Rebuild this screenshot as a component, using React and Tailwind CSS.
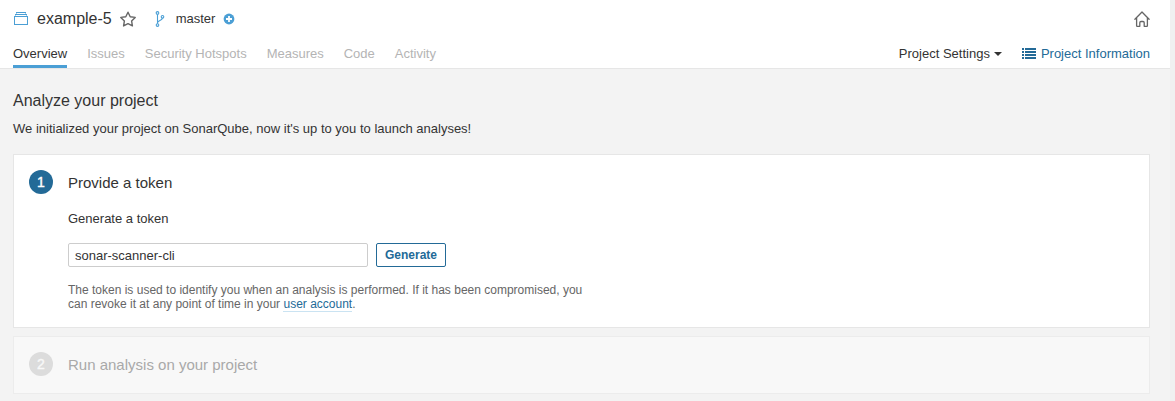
import React from 'react';

function ProjectIcon() {
  return (
    <svg width="16" height="16" viewBox="0 0 16 16" fill="#4b9fd5">
      <path d="M14.985 13.988L1 14.005 1.02 5h13.966v8.988h-.001zM1.998 5.995l.006 7.02L13.98 13 14 5.995H1.998zM3 4.5V4h9.996l.004.5h1l-.005-1.497-11.98.003L2 4.5h1zm1-2v-.504h8.002L12 2.5h.996l-.003-1.495H3.004L3 2.5h1z" />
    </svg>
  );
}

function StarIcon() {
  return (
    <svg width="16" height="16" viewBox="0 0 16 16" fill="none" stroke="#666" strokeWidth="1.4" strokeLinejoin="round">
      <path d="M8 1.2 L10.2 5.7 L15.2 6.4 L11.6 9.9 L12.4 14.9 L8 12.6 L3.6 14.9 L4.4 9.9 L.8 6.4 L5.8 5.7 Z" />
    </svg>
  );
}

function BranchIcon() {
  return (
    <svg width="16" height="16" viewBox="0 0 16 16" fill="none" stroke="#4b9fd5" strokeWidth="1.1">
      <circle cx="5.5" cy="1.9" r="1.3" />
      <circle cx="5.5" cy="14.1" r="1.3" />
      <circle cx="10.5" cy="5.8" r="1.3" />
      <path d="M5.5 3.2v9.6M10.4 7.1c-.1 2.9-4.9 2-4.9 4.9" />
    </svg>
  );
}

function PlusIcon() {
  return (
    <svg width="12" height="12" viewBox="0 0 12 12">
      <circle cx="6" cy="6" r="5.4" fill="#4b9fd5" />
      <path d="M6 3v6M3 6h6" stroke="#fff" strokeWidth="1.8" />
    </svg>
  );
}

function HomeIcon() {
  return (
    <svg width="16" height="16" viewBox="0 0 16 16" fill="none" stroke="#666" strokeWidth="1.3" strokeLinejoin="round" strokeLinecap="round">
      <path d="M.9 8.3 8 1l7.1 7.3M2.6 7v7.7q0 .6.6.6h2.6v-3.6q0-1.2 1.2-1.2h2q1.2 0 1.2 1.2v3.6h2.6q.6 0 .6-.6V7" />
    </svg>
  );
}

function ListIcon() {
  return (
    <svg className="mb-px" width="14" height="11" viewBox="0 0 14 11" fill="#236a97" shapeRendering="crispEdges">
      <path d="M0 0h2v2H0zM3 0h11v2H3zM0 3h2v2H0zM3 3h11v2H3zM0 6h2v2H0zM3 6h11v2H3zM0 9h2v2H0zM3 9h11v2H3z" />
    </svg>
  );
}

const tabs = ['Issues', 'Security Hotspots', 'Measures', 'Code', 'Activity'];

export default function App() {
  return (
    <div className="h-[401px] w-[1175px] overflow-hidden bg-[#f3f3f3] font-['Liberation_Sans',Arial,sans-serif] text-[13px] leading-5 text-[#333]">
      <div className="flex h-full">
        <div className="w-[1170px]">
          <header className="flex h-[69px] flex-col border-b border-[#e6e6e6] bg-white pr-5 pl-[13px]">
            <div className="flex h-[38px] items-center">
              <ProjectIcon />
              <h1 className="ml-2 text-[16px]">example-5</h1>
              <span className="ml-2"><StarIcon /></span>
              <span className="ml-4"><BranchIcon /></span>
              <span className="ml-2">master</span>
              <span className="ml-2"><PlusIcon /></span>
              <span className="ml-auto"><HomeIcon /></span>
            </div>
            <nav className="flex h-[30px] gap-5">
              <a className="h-[30px] border-b-3 border-[#4b9fd5] pt-[6px]">Overview</a>
              {tabs.map((t) => (
                <a key={t} className="pt-[6px] text-[#b4b4b4]">{t}</a>
              ))}
              <a className="ml-auto flex items-center gap-1 pt-[2px]">
                Project Settings
                <svg width="8" height="4" viewBox="0 0 8 4" fill="#333"><path d="M0 0h8L4 4z" /></svg>
              </a>
              <a className="flex items-center gap-[5px] pt-[2px] text-[#236a97]">
                <ListIcon />
                Project Information
              </a>
            </nav>
          </header>
          <main className="pr-5 pl-[13px]">
            <h2 className="pt-[22px] text-[16px]">Analyze your project</h2>
            <p className="pt-2">We initialized your project on SonarQube, now it's up to you to launch analyses!</p>
            <section className="mt-[15px] flex h-[174px] border border-[#e6e6e6] bg-white pt-[15px] pl-[15px]">
              <span className="flex size-6 items-center justify-center rounded-full bg-[#236a97] text-[14px] text-white [-webkit-text-stroke:0.4px_white]">1</span>
              <div className="ml-[15px]">
                <h3 className="pt-[3px] text-[15px]">Provide a token</h3>
                <p className="pt-4">Generate a token</p>
                <div className="mt-[14px] flex gap-2">
                  <div className="flex h-6 w-[300px] items-center rounded-[2px] border border-[#cdcdcd] px-[6px] pt-[2px]">sonar-scanner-cli</div>
                  <button className="h-6 w-[70px] rounded-[2px] border border-[#236a97] text-[12px] font-bold text-[#236a97]">Generate</button>
                </div>
                <p className="mt-4 text-[12px] leading-[14px] text-[#666]">
                  The token is used to identify you when an analysis is performed. If it has been compromised, you
                  <br />
                  can revoke it at any point of time in your <a className="border-b border-[#cae3f2] text-[#236a97]">user account</a>.
                </p>
              </div>
            </section>
            <section className="mt-2 flex h-[58px] border border-[#ececec] bg-[#f8f8f8] pt-[15px] pl-[15px]">
              <span className="flex size-6 items-center justify-center rounded-full bg-[#dcdcdc] text-[14px] text-[#f8f8f8] [-webkit-text-stroke:0.4px_#f8f8f8]">2</span>
              <h3 className="ml-[15px] pt-[3px] text-[15px] text-[#a9a9a9]">Run analysis on your project</h3>
            </section>
          </main>
        </div>
        <div className="flex-1 bg-[#f0f0f0]" />
      </div>
    </div>
  );
}
